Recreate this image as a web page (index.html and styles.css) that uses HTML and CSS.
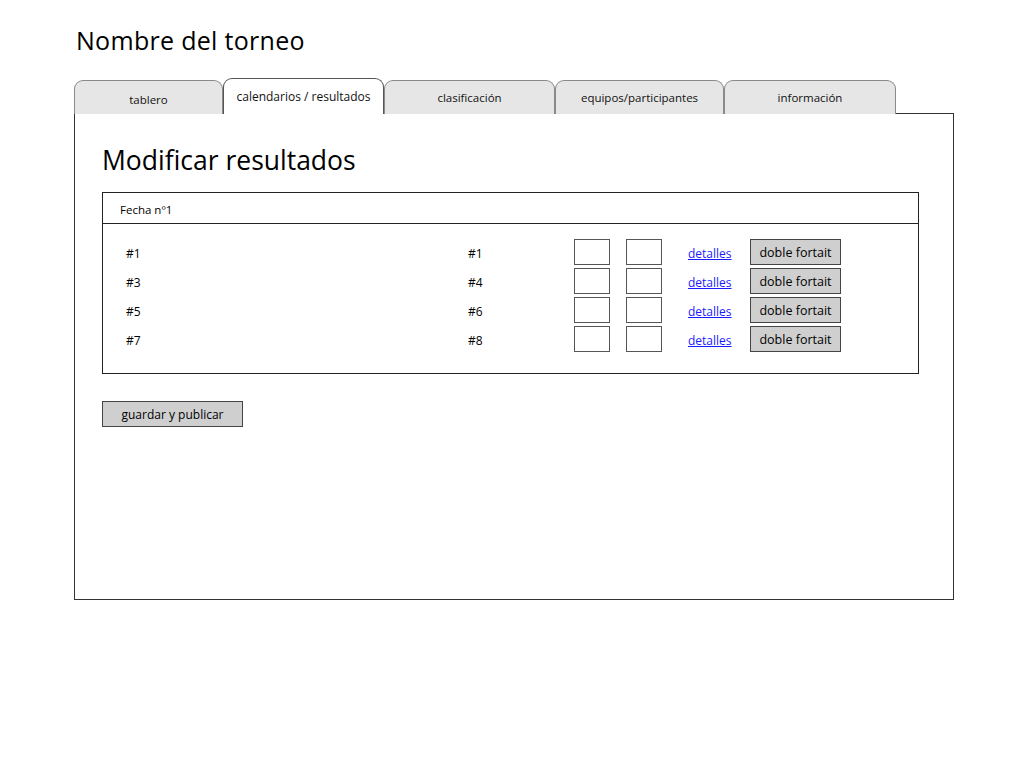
FILE: index.html
```html
<!DOCTYPE html>
<html lang="es">
<head>
<meta charset="utf-8">
<title>Nombre del torneo</title>
<link rel="stylesheet" href="styles.css">
</head>
<body>
<div class="page">
  <h1 class="title">Nombre del torneo</h1>
  <div class="tabs">
    <div class="tab tab-1">tablero</div>
    <div class="tab tab-2 active">calendarios / resultados</div>
    <div class="tab tab-3">clasificación</div>
    <div class="tab tab-4">equipos/participantes</div>
    <div class="tab tab-5">información</div>
  </div>
  <div class="panel">
    <h2 class="heading">Modificar resultados</h2>
    <div class="box">
      <div class="box-head">Fecha nº1</div>
      <div class="box-body">
        <div class="row">
          <span class="team home">#1</span>
          <span class="team away">#1</span>
          <span class="score"></span>
          <span class="score"></span>
          <a class="link" href="#">detalles</a>
          <span class="btn">doble fortait</span>
        </div>
        <div class="row">
          <span class="team home">#3</span>
          <span class="team away">#4</span>
          <span class="score"></span>
          <span class="score"></span>
          <a class="link" href="#">detalles</a>
          <span class="btn">doble fortait</span>
        </div>
        <div class="row">
          <span class="team home">#5</span>
          <span class="team away">#6</span>
          <span class="score"></span>
          <span class="score"></span>
          <a class="link" href="#">detalles</a>
          <span class="btn">doble fortait</span>
        </div>
        <div class="row">
          <span class="team home">#7</span>
          <span class="team away">#8</span>
          <span class="score"></span>
          <span class="score"></span>
          <a class="link" href="#">detalles</a>
          <span class="btn">doble fortait</span>
        </div>
      </div>
    </div>
    <span class="btn btn-save">guardar y publicar</span>
  </div>
</div>
</body>
</html>
```

FILE: styles.css
```css
* { box-sizing: border-box; }
body {
  margin: 0;
  background: #fff;
  font-family: "Open Sans", "DejaVu Sans", sans-serif;
  color: #000;
}
.page {
  padding: 22px 0 0 74px;
  width: 1024px;
}
.title {
  margin: 0 0 0 2px;
  font-weight: normal;
  font-size: 25px;
  line-height: 36px;
  letter-spacing: 0.3px;
  height: 57px;
}
.tabs {
  display: flex;
  align-items: flex-end;
  height: 35px;
  position: relative;
  z-index: 1;
  margin-bottom: -1px;
}
.tab {
  height: 34px;
  background: #e6e6e6;
  border: 1px solid #8a8a8a;
  border-bottom: none;
  border-radius: 9px 9px 0 0;
  font-size: 11.5px;
  display: flex;
  justify-content: center;
  align-items: center;
  padding-bottom: 1px;
  color: #111;
}
.tab-1 { width: 149px; padding-top: 4px; }
.tab-2 { width: 161px; }
.tab-3 { width: 171px; }
.tab-4 { width: 169px; }
.tab-5 { width: 172px; }
.tab.active {
  background: #fff;
  border-color: #555;
  height: 36px;
  padding-bottom: 0;
  font-size: 12px;
}
.panel {
  width: 880px;
  height: 487px;
  border: 1px solid #333;
  padding: 27px 0 0 27px;
}
.heading {
  margin: 0;
  font-weight: normal;
  font-size: 26.5px;
  line-height: 38px;
  height: 51px;
}
.box {
  width: 817px;
  height: 182px;
  border: 1px solid #222;
}
.box-head {
  height: 31px;
  border-bottom: 1.5px solid #222;
  font-size: 11.5px;
  padding: 10px 0 0 17px;
  line-height: 14px;
}
.box-body {
  padding: 15px 0 0 0;
  display: flex;
  flex-direction: column;
  gap: 3px;
}
.row {
  display: flex;
  align-items: center;
  height: 26px;
  font-size: 12px;
}
.team { display: inline-block; }
.home { width: 341px; padding-left: 23px; padding-top: 3px; }
.away { width: 130px; padding-left: 24px; padding-top: 3px; }
.score {
  width: 36px;
  height: 26px;
  border: 1.5px solid #555;
  background: #fff;
  margin-right: 16px;
}
.score + .score { margin-right: 26px; }
.link {
  color: #1a1aff;
  text-decoration: underline;
  width: 62px;
  padding-top: 2px;
}
.btn {
  display: inline-flex;
  align-items: center;
  justify-content: center;
  background: #cfcfcf;
  border: 1.5px solid #444;
  height: 26px;
  width: 91px;
  font-size: 12.5px;
}
.btn-save {
  margin-top: 27px;
  width: 141px;
  height: 26px;
  font-size: 12px;
}
```
